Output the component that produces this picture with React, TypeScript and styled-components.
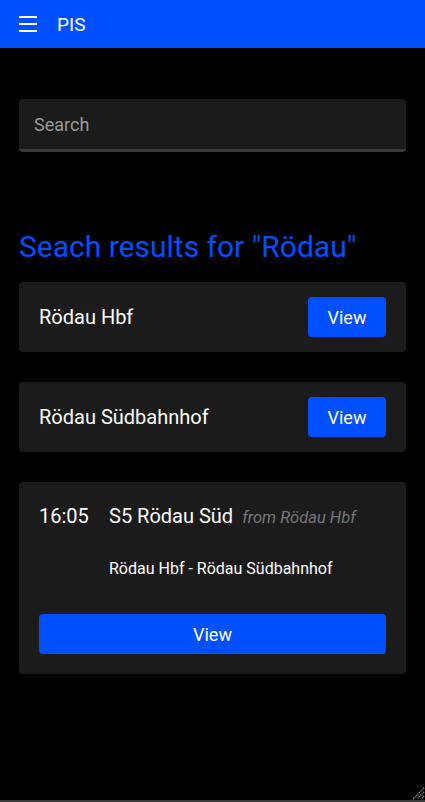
import React from "react";
import styled, { createGlobalStyle } from "styled-components";

const Global = createGlobalStyle`
  html, body { margin: 0; padding: 0; background: #000; }
  body { font-family: Roboto, "Noto Sans", sans-serif; color: #fff; }
  * { box-sizing: border-box; }
`;

const Page = styled.div`
  position: relative;
  min-height: 802px;
  background: #000;
  border-bottom: 2px solid #3a3a3a;
`;

const Header = styled.header`
  height: 48px;
  background: #0050ff;
  display: flex;
  align-items: center;
  padding-left: 18px;
  gap: 19px;
`;

const Title = styled.span`
  font-size: 19px;
  color: #fff;
  line-height: 1;
`;

const Main = styled.main`
  padding: 51px 19px 0;
`;

const SearchBox = styled.div`
  height: 53px;
  background: #1b1b1b;
  border-radius: 4px;
  border-bottom: 3px solid #3a3a3a;
  display: flex;
  align-items: center;
  padding: 0 15px;
  font-size: 18px;
  color: #9a9a9a;
`;

const Heading = styled.h2`
  margin: 76px 0 17px;
  font-size: 30px;
  font-weight: 400;
  color: #0050ff;
  line-height: 37px;
`;

const Card = styled.div`
  background: #1b1b1b;
  border-radius: 4px;
  margin-bottom: 30px;
`;

const StationCard = styled(Card)`
  height: 70px;
  display: flex;
  align-items: center;
  justify-content: space-between;
  padding: 0 20px;
  font-size: 20px;
`;

const Button = styled.button<{ $full?: boolean }>`
  background: #0050ff;
  color: #fff;
  border: none;
  border-radius: 4px;
  height: 40px;
  width: ${(p) => (p.$full ? "100%" : "78px")};
  font-family: Roboto, "Noto Sans", sans-serif;
  font-size: 18px;
  padding: 0;
`;

const TripCard = styled(Card)`
  padding: 22px 20px 20px;
`;

const TripRow = styled.div`
  display: flex;
  align-items: baseline;
  height: 32px;
`;

const Time = styled.span`
  width: 70px;
  font-size: 20px;
`;

const Line = styled.span`
  font-size: 20px;
  margin-right: 9px;
`;

const From = styled.span`
  font-size: 16.5px;
  font-style: italic;
  color: #777;
`;

const Route = styled.div`
  padding-left: 70px;
  margin-top: 23px;
  font-size: 16px;
  line-height: 19px;
`;

const Spacer = styled.div`
  height: 36px;
`;

const Grip = styled.svg`
  position: absolute;
  right: 0;
  bottom: 0;
`;

export default function App() {
  return (
    <>
      <Global />
      <Page>
        <Header>
          <svg width="20" height="20" viewBox="0 0 20 20">
            <rect x="1" y="2" width="18" height="2" fill="#fff" />
            <rect x="1" y="9" width="18" height="2" fill="#fff" />
            <rect x="1" y="16" width="18" height="2" fill="#fff" />
          </svg>
          <Title>PIS</Title>
        </Header>
        <Main>
          <SearchBox>Search</SearchBox>
          <Heading>Seach results for "Rödau"</Heading>
          <StationCard>
            <span>Rödau Hbf</span>
            <Button>View</Button>
          </StationCard>
          <StationCard>
            <span>Rödau Südbahnhof</span>
            <Button>View</Button>
          </StationCard>
          <TripCard>
            <TripRow>
              <Time>16:05</Time>
              <Line>S5 Rödau Süd</Line>
              <From>from Rödau Hbf</From>
            </TripRow>
            <Route>Rödau Hbf - Rödau Südbahnhof</Route>
            <Spacer />
            <Button $full>View</Button>
          </TripCard>
        </Main>
        <Grip width="14" height="14" viewBox="0 0 14 14">
          <path d="M13 2 L2 13 M13 6 L6 13 M13 10 L10 13" stroke="#9a9a9a" strokeWidth="1.5" strokeDasharray="1 1" />
        </Grip>
      </Page>
    </>
  );
}
